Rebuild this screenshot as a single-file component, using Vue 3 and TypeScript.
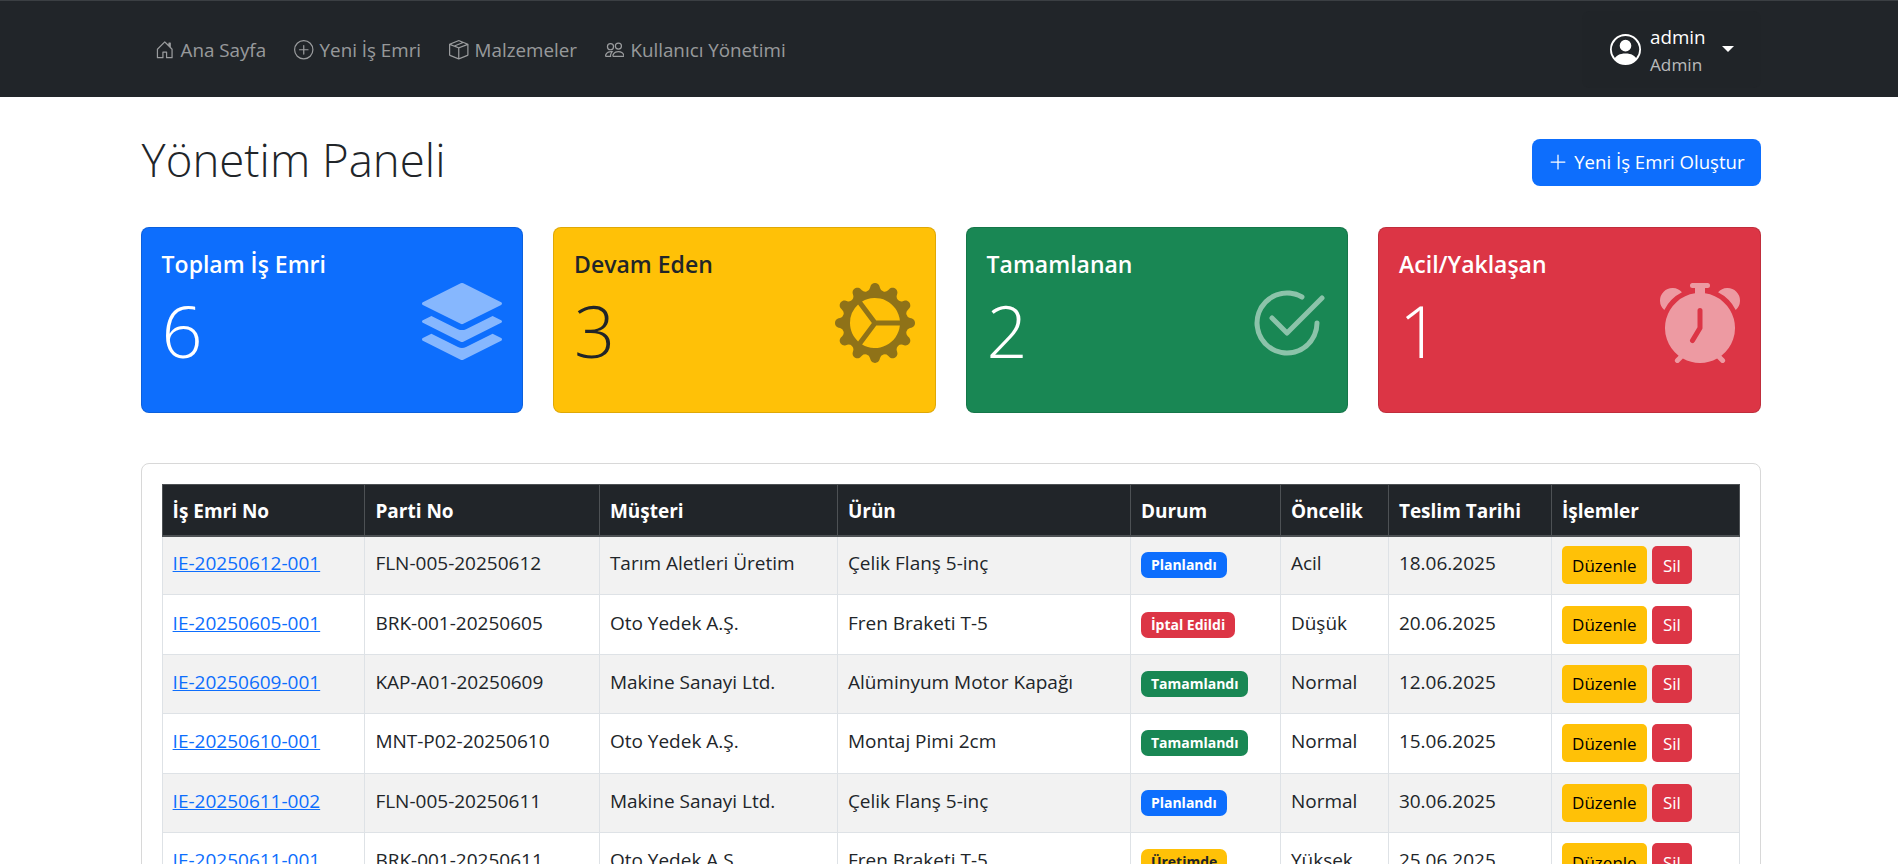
<template>
  <div class="page">
    <nav class="navbar">
      <ul class="nav-links">
        <li v-for="link in navLinks" :key="link.label" class="nav-link">
          <svg class="nav-icon" viewBox="0 0 16 16" fill="currentColor"><path :d="link.icon" /></svg>
          <span>{{ link.label }}</span>
        </li>
      </ul>
      <div class="user-menu">
        <svg class="user-icon" viewBox="0 0 16 16" fill="currentColor"><path fill-rule="evenodd" :d="icons.person" /></svg>
        <div class="user-text">
          <div class="user-name">admin</div>
          <div class="user-role">Admin</div>
        </div>
        <span class="caret"></span>
      </div>
    </nav>

    <main class="container">
      <header class="page-head">
        <h1>Yönetim Paneli</h1>
        <button class="btn-create">
          <svg viewBox="0 0 16 16" fill="currentColor"><path fill-rule="evenodd" :d="icons.plus" /></svg>
          Yeni İş Emri Oluştur
        </button>
      </header>

      <section class="stats">
        <div v-for="card in stats" :key="card.title" class="stat-card" :class="card.tone">
          <div>
            <h5>{{ card.title }}</h5>
            <div class="stat-value">{{ card.value }}</div>
          </div>
          <svg class="stat-icon" viewBox="0 0 16 16" fill="currentColor"><path :d="card.icon" /></svg>
        </div>
      </section>

      <section class="table-card">
        <table>
          <colgroup>
            <col v-for="w in colWidths" :key="w" :style="{ width: w + 'px' }" />
          </colgroup>
          <thead>
            <tr>
              <th v-for="h in headers" :key="h">{{ h }}</th>
            </tr>
          </thead>
          <tbody>
            <tr v-for="row in orders" :key="row.no">
              <td><a href="#">{{ row.no }}</a></td>
              <td>{{ row.batch }}</td>
              <td>{{ row.customer }}</td>
              <td>{{ row.product }}</td>
              <td class="cell-status"><span class="badge" :class="row.tone">{{ row.status }}</span></td>
              <td>{{ row.priority }}</td>
              <td>{{ row.due }}</td>
              <td class="cell-actions">
                <button class="btn-edit">Düzenle</button>
                <button class="btn-delete">Sil</button>
              </td>
            </tr>
          </tbody>
        </table>
      </section>
    </main>
  </div>
</template>

<script setup lang="ts">
interface Order {
  no: string
  batch: string
  customer: string
  product: string
  status: string
  tone: string
  priority: string
  due: string
}

const icons = {
  house: 'M8.354 1.146a.5.5 0 0 0-.708 0l-6 6A.5.5 0 0 0 1.5 7.5v7a.5.5 0 0 0 .5.5h4.5a.5.5 0 0 0 .5-.5v-4h2v4a.5.5 0 0 0 .5.5H14a.5.5 0 0 0 .5-.5v-7a.5.5 0 0 0-.146-.354L13 5.793V2.5a.5.5 0 0 0-.5-.5h-1a.5.5 0 0 0-.5.5v1.293zM2.5 14V7.707l5.5-5.5 5.5 5.5V14H10v-4a.5.5 0 0 0-.5-.5h-3a.5.5 0 0 0-.5.5v4z',
  plusCircle: 'M8 15A7 7 0 1 1 8 1a7 7 0 0 1 0 14m0 1A8 8 0 1 0 8 0a8 8 0 0 0 0 16M8 4a.5.5 0 0 1 .5.5v3h3a.5.5 0 0 1 0 1h-3v3a.5.5 0 0 1-1 0v-3h-3a.5.5 0 0 1 0-1h3v-3A.5.5 0 0 1 8 4',
  box: 'M8.186 1.113a.5.5 0 0 0-.372 0L1.846 3.5l2.404.961L10.404 2zm3.564 1.426L5.596 5 8 5.961 14.154 3.5zm3.25 1.7-6.5 2.6v7.922l6.5-2.6V4.24zM7.5 14.762V6.838L1 4.239v7.925zM7.443.184a1.5 1.5 0 0 1 1.114 0l7.129 2.852A.5.5 0 0 1 16 3.5v8.662a1 1 0 0 1-.629.928l-7.185 2.874a.5.5 0 0 1-.372 0L.63 13.09a1 1 0 0 1-.63-.928V3.5a.5.5 0 0 1 .314-.464z',
  people: 'M15 14s1 0 1-1-1-4-5-4-5 3-5 4 1 1 1 1zm-7.978-1L7 12.996c.001-.264.167-1.03.76-1.72C8.312 10.629 9.282 10 11 10c1.717 0 2.687.63 3.24 1.276.593.69.758 1.457.76 1.72l-.008.002-.014.002zM11 7a2 2 0 1 0 0-4 2 2 0 0 0 0 4m3-2a3 3 0 1 1-6 0 3 3 0 0 1 6 0M6.936 9.28a6 6 0 0 0-1.23-.247A7 7 0 0 0 5 9c-4 0-5 3-5 4q0 1 1 1h4.216A2.24 2.24 0 0 1 5 13c0-1.01.377-2.042 1.09-2.904.243-.294.526-.569.846-.816M4.92 10A5.5 5.5 0 0 0 4 13H1c0-.26.164-1.03.76-1.724.545-.636 1.492-1.256 3.16-1.275zM1.5 5.5a3 3 0 1 1 6 0 3 3 0 0 1-6 0m3-2a2 2 0 1 0 0 4 2 2 0 0 0 0-4',
  person: 'M11 6a3 3 0 1 1-6 0 3 3 0 0 1 6 0M0 8a8 8 0 1 1 16 0A8 8 0 0 1 0 8m8-7a7 7 0 0 0-5.468 11.37C3.242 11.226 4.805 10 8 10s4.757 1.225 5.468 2.37A7 7 0 0 0 8 1',
  plus: 'M8 2a.5.5 0 0 1 .5.5v5h5a.5.5 0 0 1 0 1h-5v5a.5.5 0 0 1-1 0v-5h-5a.5.5 0 0 1 0-1h5v-5A.5.5 0 0 1 8 2',
  stack: 'm14.12 10.163 1.715.858c.22.11.22.424 0 .534L8.267 15.34a.6.6 0 0 1-.534 0L.165 11.555a.299.299 0 0 1 0-.534l1.716-.858 5.317 2.659c.505.252 1.1.252 1.604 0l5.317-2.66zM7.733.063a.6.6 0 0 1 .534 0l7.568 3.784a.3.3 0 0 1 0 .535L8.267 8.165a.6.6 0 0 1-.534 0L.165 4.382a.299.299 0 0 1 0-.535zM14.12 6.576l1.715.858c.22.11.22.424 0 .534l-7.568 3.784a.6.6 0 0 1-.534 0L.165 7.968a.299.299 0 0 1 0-.534l1.716-.858 5.317 2.659c.505.252 1.1.252 1.604 0z',
  gear: 'M7.068.727c.243-.97 1.62-.97 1.864 0l.071.286a.96.96 0 0 0 1.622.434l.205-.211c.695-.719 1.888-.03 1.613.931l-.08.284a.96.96 0 0 0 1.187 1.187l.283-.081c.96-.275 1.65.918.931 1.613l-.211.205a.96.96 0 0 0 .434 1.622l.286.071c.97.243.97 1.62 0 1.864l-.286.071a.96.96 0 0 0-.434 1.622l.211.205c.719.695.03 1.888-.931 1.613l-.284-.08a.96.96 0 0 0-1.187 1.187l.081.283c.275.96-.918 1.65-1.613.931l-.205-.211a.96.96 0 0 0-1.622.434l-.071.286c-.243.97-1.62.97-1.864 0l-.071-.286a.96.96 0 0 0-1.622-.434l-.205.211c-.695.719-1.888.03-1.613-.931l.08-.284a.96.96 0 0 0-1.187-1.187l-.283.081c-.96.275-1.65-.918-.931-1.613l.211-.205a.96.96 0 0 0-.434-1.622l-.286-.071c-.97-.243-.97-1.62 0-1.864l.286-.071a.96.96 0 0 0 .434-1.622l-.211-.205c-.719-.695-.03-1.888.931-1.613l.284.08a.96.96 0 0 0 1.187-1.187l-.081-.283c-.275-.96.918-1.65 1.613-.931l.205.211a.96.96 0 0 0 1.622-.434zM12.973 8.5H8.25l-2.834 3.779A4.998 4.998 0 0 0 12.973 8.5m0-1a4.998 4.998 0 0 0-7.557-3.779l2.834 3.78zM5.048 3.967l-.087.065zm-.431.355A4.98 4.98 0 0 0 3.002 8c0 1.455.622 2.765 1.615 3.678L7.375 8 4.617 4.322zm.344 7.646.087.065z',
  check: 'M2.5 8a5.5 5.5 0 0 1 8.25-4.764.5.5 0 0 0 .5-.866A6.5 6.5 0 1 0 14.5 8a.5.5 0 0 0-1 0 5.5 5.5 0 1 1-11 0M15.354 3.354a.5.5 0 0 0-.708-.708L8 9.293 5.354 6.646a.5.5 0 1 0-.708.708l3 3a.5.5 0 0 0 .708 0z',
  alarm: 'M6 .5a.5.5 0 0 1 .5-.5h3a.5.5 0 0 1 0 1H9v1.07a7.001 7.001 0 0 1 3.274 12.474l.601.602a.5.5 0 0 1-.707.708l-.746-.746A6.97 6.97 0 0 1 8 16a6.97 6.97 0 0 1-3.422-.892l-.746.746a.5.5 0 0 1-.707-.708l.602-.602A7.001 7.001 0 0 1 7 2.07V1h-.5A.5.5 0 0 1 6 .5m2.5 5a.5.5 0 0 0-1 0v3.362l-1.429 2.38a.5.5 0 1 0 .858.515l1.5-2.5A.5.5 0 0 0 8.5 9zM.86 5.387A2.5 2.5 0 1 1 4.387 1.86 8.04 8.04 0 0 0 .86 5.387M11.613 1.86a2.5 2.5 0 1 1 3.527 3.527 8.04 8.04 0 0 0-3.527-3.527',
}

const navLinks = [
  { label: 'Ana Sayfa', icon: icons.house },
  { label: 'Yeni İş Emri', icon: icons.plusCircle },
  { label: 'Malzemeler', icon: icons.box },
  { label: 'Kullanıcı Yönetimi', icon: icons.people },
]

const stats = [
  { title: 'Toplam İş Emri', value: 6, tone: 'blue', icon: icons.stack },
  { title: 'Devam Eden', value: 3, tone: 'yellow', icon: icons.gear },
  { title: 'Tamamlanan', value: 2, tone: 'green', icon: icons.check },
  { title: 'Acil/Yaklaşan', value: 1, tone: 'red', icon: icons.alarm },
]

const colWidths = [202.8, 234.5, 238, 293, 150, 108, 163, 188.5]
const headers = ['İş Emri No', 'Parti No', 'Müşteri', 'Ürün', 'Durum', 'Öncelik', 'Teslim Tarihi', 'İşlemler']

const orders: Order[] = [
  { no: 'IE-20250612-001', batch: 'FLN-005-20250612', customer: 'Tarım Aletleri Üretim', product: 'Çelik Flanş 5-inç', status: 'Planlandı', tone: 'blue', priority: 'Acil', due: '18.06.2025' },
  { no: 'IE-20250605-001', batch: 'BRK-001-20250605', customer: 'Oto Yedek A.Ş.', product: 'Fren Braketi T-5', status: 'İptal Edildi', tone: 'red', priority: 'Düşük', due: '20.06.2025' },
  { no: 'IE-20250609-001', batch: 'KAP-A01-20250609', customer: 'Makine Sanayi Ltd.', product: 'Alüminyum Motor Kapağı', status: 'Tamamlandı', tone: 'green', priority: 'Normal', due: '12.06.2025' },
  { no: 'IE-20250610-001', batch: 'MNT-P02-20250610', customer: 'Oto Yedek A.Ş.', product: 'Montaj Pimi 2cm', status: 'Tamamlandı', tone: 'green', priority: 'Normal', due: '15.06.2025' },
  { no: 'IE-20250611-002', batch: 'FLN-005-20250611', customer: 'Makine Sanayi Ltd.', product: 'Çelik Flanş 5-inç', status: 'Planlandı', tone: 'blue', priority: 'Normal', due: '30.06.2025' },
  { no: 'IE-20250611-001', batch: 'BRK-001-20250611', customer: 'Oto Yedek A.Ş.', product: 'Fren Braketi T-5', status: 'Üretimde', tone: 'yellow', priority: 'Yüksek', due: '25.06.2025' },
]
</script>

<style>
html,
body {
  overflow: hidden;
  background: #fff;
}
</style>

<style scoped>
.page {
  font-family: 'Open Sans', 'Liberation Sans', sans-serif;
  font-size: 19px;
  line-height: 24px;
  color: #212529;
  height: 864px;
  overflow: hidden;
}

.navbar {
  height: 97px;
  box-sizing: border-box;
  background: #212529;
  border-top: 1px solid #3b3f43;
  display: flex;
  align-items: center;
  justify-content: space-between;
  padding: 0 137px 0 141px;
}

.nav-links {
  display: flex;
  list-style: none;
  margin: 2px 0 0;
  padding: 0;
}

.nav-link {
  display: flex;
  align-items: center;
  gap: 6px;
  padding: 0 14px;
  font-size: 18.8px;
  color: rgba(255, 255, 255, 0.55);
}

.nav-icon {
  width: 19.5px;
  height: 19.5px;
}

.user-menu {
  width: 179px;
  height: 77px;
  box-sizing: border-box;
  display: flex;
  align-items: center;
  padding-left: 28px;
  color: #fff;
  background: #202428;
  border-radius: 8px;
}

.user-icon {
  width: 31px;
  height: 31px;
}

.user-text {
  margin: 3px 0 0 9px;
  font-size: 18.8px;
  line-height: 27px;
  width: 72px;
}

.user-role {
  font-size: 17.2px;
  color: rgba(255, 255, 255, 0.7);
}

.caret {
  width: 0;
  height: 0;
  border-left: 6px solid transparent;
  border-right: 6px solid transparent;
  border-top: 6px solid #fff;
}

.container {
  width: 1620px;
  margin-left: 140.6px;
}

.page-head {
  display: flex;
  align-items: center;
  justify-content: space-between;
  padding-top: 34px;
  height: 96px;
  box-sizing: border-box;
  margin-bottom: 34px;
}

h1 {
  margin: -6px 0 0 1px;
  font-size: 45.6px;
  line-height: 58px;
  font-weight: 300;
}

.btn-create {
  display: flex;
  align-items: center;
  gap: 6px;
  height: 47px;
  padding: 0 16px;
  border: none;
  border-radius: 8px;
  background: #0d6efd;
  color: #fff;
  font: inherit;
  font-size: 18.6px;
}

.btn-create svg {
  width: 20px;
  height: 20px;
}

.stats {
  display: grid;
  grid-template-columns: repeat(4, 1fr);
  gap: 30px;
}

.stat-card {
  height: 186px;
  box-sizing: border-box;
  padding: 20px;
  border: 1px solid rgba(0, 0, 0, 0.125);
  border-radius: 8px;
  display: flex;
  justify-content: space-between;
  align-items: center;
  color: #fff;
}

.stat-card > div {
  align-self: flex-start;
}

.stat-card.blue { background: #0d6efd; }
.stat-card.yellow { background: #ffc107; color: #212529; }
.stat-card.green { background: #198754; }
.stat-card.red { background: #dc3545; }

h5 {
  margin: 4px 0 0;
  font-size: 23px;
  line-height: 24px;
  font-weight: 600;
}

.stat-value {
  margin-top: 11px;
  font-size: 72px;
  line-height: 86px;
  font-weight: 300;
}

.stat-icon {
  width: 80px;
  height: 80px;
  margin-top: 6px;
  opacity: 0.5;
}

.table-card {
  margin-top: 50px;
  padding: 20px;
  background: #fff;
  border: 1px solid #d8d8d8;
  border-radius: 8px;
}

table {
  width: 1577.8px;
  table-layout: fixed;
  border-collapse: collapse;
}

th {
  height: 51px;
  box-sizing: border-box;
  padding: 2px 10px 0;
  text-align: left;
  background: #212529;
  color: #fff;
  font-weight: 700;
  border: 1px solid #4d5154;
  border-bottom-width: 2px;
}

td {
  height: 59.4px;
  box-sizing: border-box;
  padding: 0 10px 4px;
  border: 1px solid #dee2e6;
  white-space: nowrap;
}

tbody tr:nth-child(odd) td {
  background: #f2f2f2;
}

a {
  color: #0d6efd;
}

td.cell-status {
  padding-bottom: 1px;
}

td.cell-actions {
  padding-bottom: 0;
  font-size: 0;
}

.badge {
  display: inline-block;
  height: 26px;
  box-sizing: border-box;
  padding: 0 10px;
  border-radius: 7px;
  font-size: 14px;
  line-height: 26px;
  font-weight: 700;
  color: #fff;
  vertical-align: middle;
}

.badge.blue { background: #0d6efd; }
.badge.red { background: #dc3545; }
.badge.green { background: #198754; }
.badge.yellow { background: #ffc107; color: #212529; }

.cell-actions button {
  height: 38px;
  padding: 0;
  border: none;
  border-radius: 5px;
  font-family: inherit;
  font-size: 17px;
  vertical-align: middle;
}

.btn-edit {
  background: #ffc107;
  color: #000;
  width: 85px;
}

.btn-delete {
  background: #dc3545;
  color: #fff;
  width: 40px;
  margin-left: 5px;
}
</style>
